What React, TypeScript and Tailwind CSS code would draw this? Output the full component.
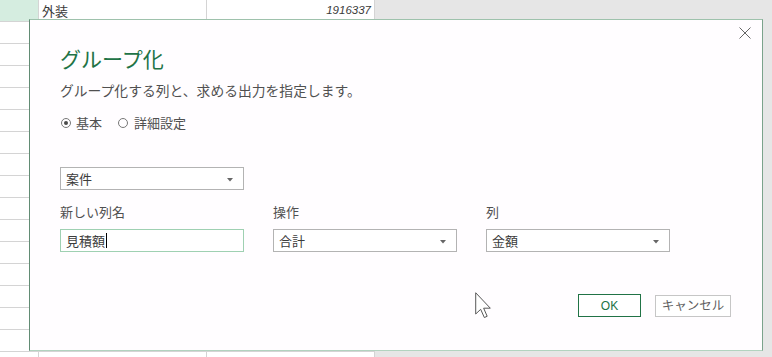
import React from 'react';

// Spreadsheet rows behind the dialog
const ROW_COUNT = 17;

function Cell({ className, children }: { className?: string; children?: React.ReactNode }) {
  return <div className={`h-full border-r border-[#d4d4d4] ${className ?? ''}`}>{children}</div>;
}

function SheetRows() {
  return (
    <div className="flex w-[375px] flex-col bg-white">
      {Array.from({ length: ROW_COUNT }).map((_, i) => (
        <div key={i} className="flex h-[22px] shrink-0 border-b border-[#d4d4d4]">
          <Cell className={`w-[39px] ${i === 0 ? 'bg-[#d5ede0]' : ''}`} />
          <Cell className="w-[168px] pl-[3px] text-[13px] leading-[21px] text-[#3a3a3a]">
            {i === 0 ? '外装' : null}
          </Cell>
          <Cell className="w-[168px] pr-[3px] text-right font-['Liberation_Sans'] text-[11.5px] italic leading-[21px] text-[#3a3a3a]">
            {i === 0 ? '1916337' : null}
          </Cell>
        </div>
      ))}
    </div>
  );
}

function Radio({ checked }: { checked?: boolean }) {
  return (
    <span className="flex h-[10px] w-[10px] items-center justify-center rounded-full border border-[#777]">
      {checked && <span className="h-[4px] w-[4px] rounded-full bg-[#4a4a4a]" />}
    </span>
  );
}

function Select({ value }: { value: string }) {
  return (
    <div className="flex h-[23px] w-[184px] items-center justify-between border border-[#b3b3b3] bg-white pl-[5px] pr-[10px]">
      <span className="text-[13px] leading-none text-[#3c3c3c]">{value}</span>
      <CaretDown />
    </div>
  );
}

function Field({ label, children }: { label: string; children: React.ReactNode }) {
  return (
    <div className="flex w-[184px] flex-col">
      <span className="text-[13px] leading-[20px] text-[#505050]">{label}</span>
      <div className="mt-[7px]">{children}</div>
    </div>
  );
}

export default function App() {
  return (
    <div className="relative h-[357px] w-[772px] overflow-hidden bg-[#e6e6e6] font-['Noto_Sans_CJK_JP',sans-serif]">
      <SheetRows />

      {/* Dialog */}
      <div className="absolute left-[29px] top-[19px] flex h-[332px] w-[734px] flex-col border border-l-[#628c74] border-r-[#7ba38b] border-t-[#9ec2ac] border-b-[#b2d3bf] bg-[#fffdff] pl-[30px] pr-[31px]">
        <button className="absolute right-[11px] top-[7px] text-[#666]">
          <CloseIcon className="h-[12px] w-[12px]" />
        </button>

        <h1 className="mt-[24px] text-[21px] font-normal leading-[28px] text-[#217346]">グループ化</h1>
        <p className="mt-[8px] text-[13.8px] leading-[20px] text-[#505050]">
          グループ化する列と、求める出力を指定します。
        </p>

        <div className="mt-[13px] flex h-[20px] items-center text-[13px] text-[#505050]">
          <span className="ml-[1px]">
            <Radio checked />
          </span>
          <span className="ml-[5px]">基本</span>
          <span className="ml-[16px]">
            <Radio />
          </span>
          <span className="ml-[6px]">詳細設定</span>
        </div>

        <div className="mt-[34px]">
          <Select value="案件" />
        </div>

        <div className="mt-[12px] flex gap-[29px]">
          <Field label="新しい列名">
            <div className="flex h-[23px] w-[184px] items-center border border-[#9fd0b2] bg-white pl-[5px]">
              <span className="text-[13px] leading-none text-[#3c3c3c]">見積額</span>
              <span className="ml-[1px] h-[15px] w-[1px] bg-black" />
            </div>
          </Field>
          <Field label="操作">
            <Select value="合計" />
          </Field>
          <Field label="列">
            <Select value="金額" />
          </Field>
        </div>

        <div className="mt-[42px] flex items-center justify-end gap-[14px]">
          <button className="flex h-[23px] w-[63px] items-center justify-center border border-[#217346] bg-white font-['Liberation_Sans'] text-[12px] text-[#217346]">
            OK
          </button>
          <button className="flex h-[22px] w-[76px] items-center justify-center border border-[#c6c6c6] bg-white text-[12.5px] text-[#606060]">
            キャンセル
          </button>
        </div>
      </div>

      {/* Mouse pointer */}
      <svg className="absolute left-[475px] top-[292px] h-[27px] w-[17px]" viewBox="0 0 12 19">
        <path
          d="M0.5 0.5 L0.5 15.5 L4 12.2 L6.6 18 L8.6 17.1 L6.1 11.4 L10.8 11.4 Z"
          fill="#fff"
          stroke="#555"
          strokeWidth="0.7"
          strokeLinejoin="round"
        />
      </svg>
    </div>
  );
}

function CaretDown() {
  return (
    <svg width="6" height="4" viewBox="0 0 6 4" className="mt-[2px]">
      <path d="M0 0 H6 L3 3.5 Z" fill="#666" />
    </svg>
  );
}

function CloseIcon({ className }: { className?: string }) {
  return (
    <svg className={className} viewBox="0 0 12 12" fill="none" stroke="currentColor" strokeWidth={1}>
      <path d="M0.5 0.5 L11.5 11.5 M11.5 0.5 L0.5 11.5" />
    </svg>
  );
}
